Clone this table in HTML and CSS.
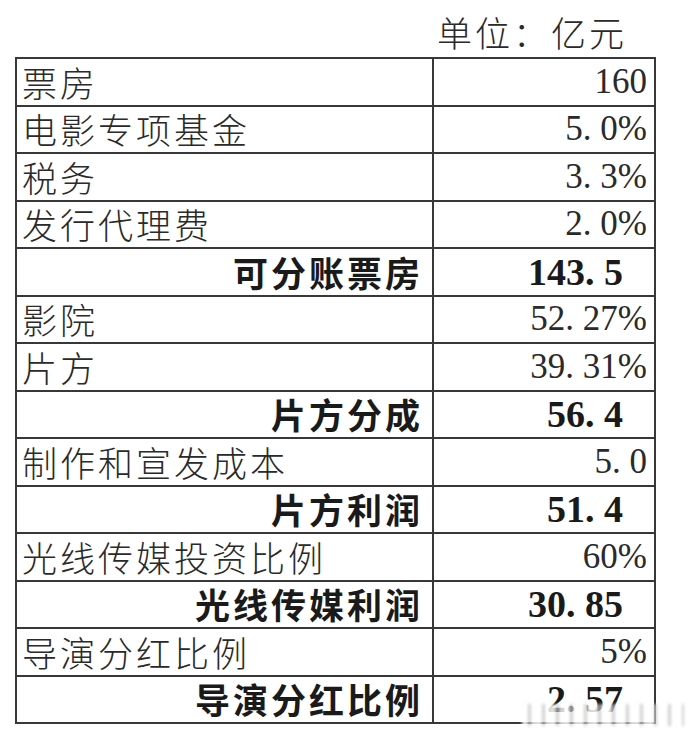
FILE: index.html
```html
<!DOCTYPE html>
<html lang="zh">
<head>
<meta charset="utf-8">
<link rel="stylesheet" href="styles.css">
</head>
<body>
<div class="page">
  <div class="unit">单位：亿元</div>
  <table class="sheet">
    <tr><td class="label">票房</td><td class="val">160</td></tr>
    <tr><td class="label">电影专项基金</td><td class="val">5<span class="dot">.</span>0%</td></tr>
    <tr><td class="label">税务</td><td class="val">3<span class="dot">.</span>3%</td></tr>
    <tr><td class="label">发行代理费</td><td class="val">2<span class="dot">.</span>0%</td></tr>
    <tr class="total"><td class="label">可分账票房</td><td class="val">143<span class="dot">.</span>5</td></tr>
    <tr><td class="label">影院</td><td class="val">52<span class="dot">.</span>27%</td></tr>
    <tr><td class="label">片方</td><td class="val">39<span class="dot">.</span>31%</td></tr>
    <tr class="total"><td class="label">片方分成</td><td class="val">56<span class="dot">.</span>4</td></tr>
    <tr><td class="label">制作和宣发成本</td><td class="val">5<span class="dot">.</span>0</td></tr>
    <tr class="total"><td class="label">片方利润</td><td class="val">51<span class="dot">.</span>4</td></tr>
    <tr><td class="label">光线传媒投资比例</td><td class="val">60%</td></tr>
    <tr class="total"><td class="label">光线传媒利润</td><td class="val">30<span class="dot">.</span>85</td></tr>
    <tr><td class="label">导演分红比例</td><td class="val">5%</td></tr>
    <tr class="total"><td class="label">导演分红比例</td><td class="val">2<span class="dot">.</span>57</td></tr>
  </table>
  <div class="watermark"></div>
</div>
</body>
</html>
```

FILE: styles.css
```css
html, body {
  margin: 0;
  padding: 0;
  background: #ffffff;
}

.page {
  position: relative;
  width: 690px;
  height: 733px;
  padding-left: 15px;
  box-sizing: border-box;
  font-family: "Noto Sans CJK SC", "Noto Sans", sans-serif;
  color: #2a2a2a;
}

.unit {
  width: 640px;
  height: 57px;
  box-sizing: border-box;
  padding-right: 28px;
  padding-top: 12px;
  text-align: right;
  font-size: 35px;
  font-weight: 300;
  letter-spacing: 3px;
  line-height: 40px;
}

.sheet {
  width: 641px;
  border-collapse: collapse;
  table-layout: fixed;
}

.sheet td {
  border: 2px solid #383838;
  height: 45.5px;
  padding: 0;
  vertical-align: middle;
  white-space: nowrap;
}

.sheet .label {
  width: 410px;
  padding-left: 5px;
  font-size: 35px;
  font-weight: 300;
  letter-spacing: 3px;
  line-height: 40px;
  text-align: left;
}

.sheet .val {
  padding-right: 7px;
  font-family: "Liberation Serif", "DejaVu Serif", serif;
  font-size: 35px;
  line-height: 40px;
  text-align: right;
  color: #2a2a2a;
}

.dot {
  display: inline-block;
  width: 0.5em;
  text-align: left;
}

.sheet .total .label {
  text-align: right;
  padding-right: 9px;
  font-weight: 700;
  color: #1a1a1a;
}

.sheet .total .val {
  padding-right: 31px;
  font-size: 38px;
  font-weight: 700;
  color: #1a1a1a;
}

.watermark {
  position: absolute;
  left: 522px;
  top: 704px;
  width: 162px;
  height: 22px;
  background: repeating-linear-gradient(90deg, rgba(255,255,255,0.85) 0 6px, rgba(170,170,170,0.55) 6px 9px, rgba(255,255,255,0.8) 9px 14px);
  filter: blur(1.5px);
}
```
